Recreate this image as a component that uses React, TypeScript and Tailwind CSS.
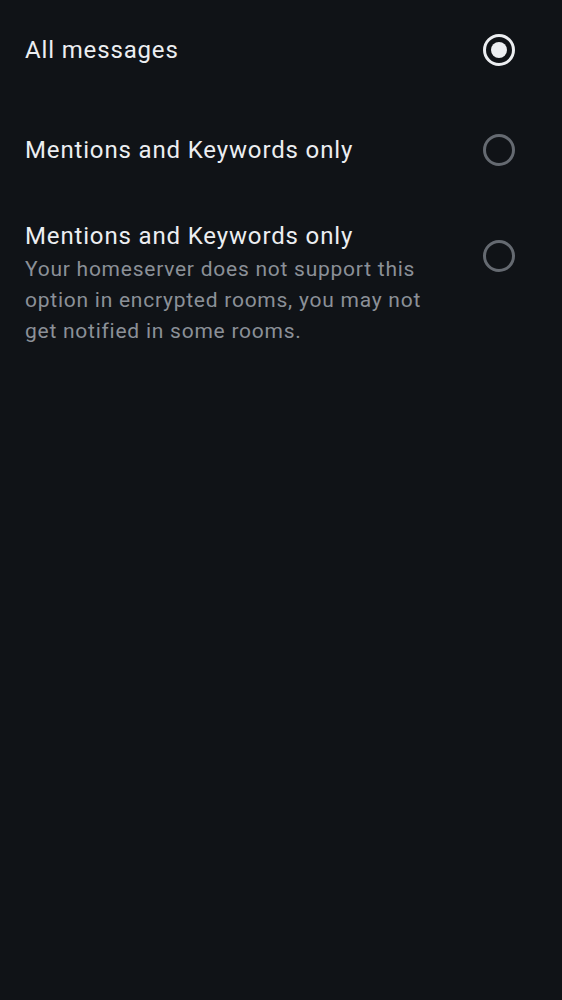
import React from "react";

function Radio({ checked }: { checked: boolean }) {
  return checked ? (
    <div className="w-[32px] h-[32px] rounded-full border-[3px] border-[#eceef1] flex items-center justify-center shrink-0">
      <div className="w-[16px] h-[16px] rounded-full bg-[#eceef1]" />
    </div>
  ) : (
    <div className="w-[32px] h-[32px] rounded-full border-[3px] border-[#656a71] shrink-0" />
  );
}

export default function App() {
  return (
    <div className="min-h-[1000px] w-full bg-[#101317] text-[#eceef1]" style={{ fontFamily: "Roboto, sans-serif" }}>
      <div className="h-[100px] flex items-center justify-between pl-[25px] pr-[47px]">
        <span className="text-[24px] leading-[30px] tracking-[0.85px]">All messages</span>
        <Radio checked />
      </div>
      <div className="h-[100px] flex items-center justify-between pl-[25px] pr-[47px]">
        <span className="text-[24px] leading-[30px] tracking-[0.85px]">Mentions and Keywords only</span>
        <Radio checked={false} />
      </div>
      <div className="flex items-start justify-between pl-[25px] pr-[47px] pt-[21px]">
        <div className="flex flex-col w-[420px]">
          <span className="text-[24px] leading-[30px] tracking-[0.85px]">Mentions and Keywords only</span>
          <span className="mt-[3px] text-[21px] leading-[31px] tracking-[0.75px] text-[#8b9097]">
            Your homeserver does not support this option in encrypted rooms, you may not get notified in some rooms.
          </span>
        </div>
        <div className="mt-[19px]">
          <Radio checked={false} />
        </div>
      </div>
    </div>
  );
}
